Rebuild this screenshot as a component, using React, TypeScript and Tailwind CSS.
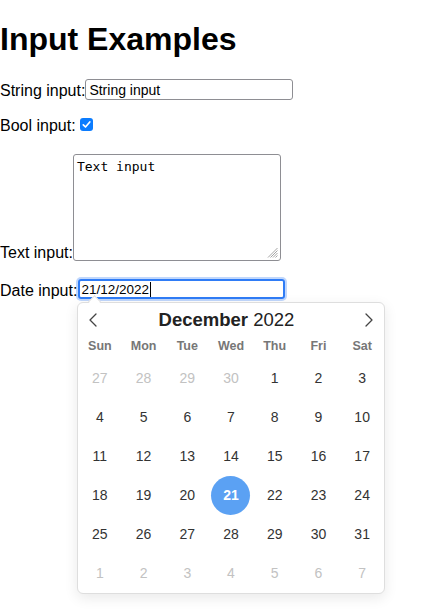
import React from 'react';

const weekDays = ['Sun', 'Mon', 'Tue', 'Wed', 'Thu', 'Fri', 'Sat'];

// [day, inMonth]
const weeks: [number, boolean][][] = [
  [[27, false], [28, false], [29, false], [30, false], [1, true], [2, true], [3, true]],
  [[4, true], [5, true], [6, true], [7, true], [8, true], [9, true], [10, true]],
  [[11, true], [12, true], [13, true], [14, true], [15, true], [16, true], [17, true]],
  [[18, true], [19, true], [20, true], [21, true], [22, true], [23, true], [24, true]],
  [[25, true], [26, true], [27, true], [28, true], [29, true], [30, true], [31, true]],
  [[1, false], [2, false], [3, false], [4, false], [5, false], [6, false], [7, false]],
];

const Chevron = ({ dir }: { dir: 'left' | 'right' }) => (
  <svg width="8" height="14" viewBox="0 0 8 14" fill="none">
    <polyline
      points={dir === 'left' ? '7,1 1,7 7,13' : '1,1 7,7 1,13'}
      stroke="#444"
      strokeWidth="1.3"
      strokeLinecap="round"
      strokeLinejoin="round"
    />
  </svg>
);

const DatePopover = () => (
  <div className="absolute top-[23px] left-[77px] w-[308px] bg-white border border-[#dedede] rounded-[6px] shadow-[0_4px_14px_rgba(0,0,0,0.09)]">
    {/* little notch pointing at the input */}
    <div className="absolute -top-[6px] left-[12px] w-[9px] h-[9px] rotate-45 bg-white border-l border-t border-[#dedede]" />

    <div className="h-[33px] flex items-center px-[11px]">
      <Chevron dir="left" />
      <div className="flex-1 text-center pr-[9px] text-[18.5px] leading-[22px] text-[#222]">
        <span className="font-bold">December</span> 2022
      </div>
      <Chevron dir="right" />
    </div>

    <div className="grid grid-cols-7 h-[20px] mb-[3px]">
      {weekDays.map(d => (
        <div key={d} className="text-center text-[12.5px] leading-[20px] font-bold text-[#777]">
          {d}
        </div>
      ))}
    </div>

    <div className="grid grid-cols-7">
      {weeks.map((week, wi) =>
        week.map(([day, inMonth], di) => {
          const selected = inMonth && day === 21;
          return (
            <div key={`${wi}-${di}`} className="h-[39px] flex items-center justify-center">
              {selected ? (
                <span className="w-[39px] h-[39px] rounded-full bg-[#5ba1f3] text-white font-bold text-[14px] flex items-center justify-center">
                  {day}
                </span>
              ) : (
                <span className={inMonth ? 'text-[14px] text-[#333]' : 'text-[14px] text-[#c2c2c2]'}>
                  {day}
                </span>
              )}
            </div>
          );
        })
      )}
    </div>
  </div>
);

export default function App() {
  return (
    <div className="min-h-[610px] bg-white text-black text-[16px] font-['Liberation_Sans',Arial,sans-serif]">
      <h1 className="mt-[21px] text-[32px] leading-[37px] font-bold">Input Examples</h1>

      <div className="mt-[21px] flex items-end">
        <label className="leading-[18px]">String input:</label>
        <input
          type="text"
          defaultValue="String input"
          className="w-[208px] h-[21px] border border-[#8e8e93] rounded-[3px] pl-[3px] text-[14px] leading-[17px] text-black outline-none"
        />
      </div>

      <div className="mt-[17px] flex items-end">
        <label className="leading-[18px]">Bool input:</label>
        <span className="ml-[4px] mb-[4px] w-[13px] h-[13px] rounded-[3px] bg-[#0b7cfe] flex items-center justify-center">
          <svg width="11" height="11" viewBox="0 0 11 11" fill="none">
            <polyline
              points="2.3,5.8 4.5,8 8.8,3"
              stroke="white"
              strokeWidth="1.7"
              strokeLinecap="round"
              strokeLinejoin="round"
            />
          </svg>
        </span>
      </div>

      <div className="mt-[19px] flex items-end">
        <label className="leading-[18px]">Text input:</label>
        <div className="relative mb-[1px]">
          <textarea
            defaultValue="Text input"
            className="block w-[208px] h-[107px] border border-[#8e8e93] rounded-[3px] px-[3px] pt-[4px] resize-none outline-none text-[13px] leading-[16px] text-black font-['DejaVu_Sans_Mono',monospace]"
          />
          <svg className="absolute right-[3px] bottom-[3px]" width="12" height="12" viewBox="0 0 12 12">
            <g stroke="#9a9a9a" strokeWidth="0.9">
              <line x1="11.5" y1="2" x2="2" y2="11.5" />
              <line x1="11.5" y1="4.5" x2="4.5" y2="11.5" />
              <line x1="11.5" y1="7" x2="7" y2="11.5" />
              <line x1="11.5" y1="9.5" x2="9.5" y2="11.5" />
            </g>
          </svg>
        </div>
      </div>

      <div className="relative mt-[17px] flex items-end">
        <label className="leading-[18px]">Date input:</label>
        <div className="ml-[1px] mb-[1px] w-[207px] h-[20px] border-2 border-[#2f7cf6] rounded-[3px] shadow-[0_0_0_2px_rgba(47,124,246,0.3)] pl-[1px] flex items-center text-[13.5px] leading-[16px] pt-[2px]">
          <span>21/12/2022</span>
          <span className="w-px h-[15px] bg-black ml-[1px] -mt-[1px]" />
        </div>
        <DatePopover />
      </div>
    </div>
  );
}
